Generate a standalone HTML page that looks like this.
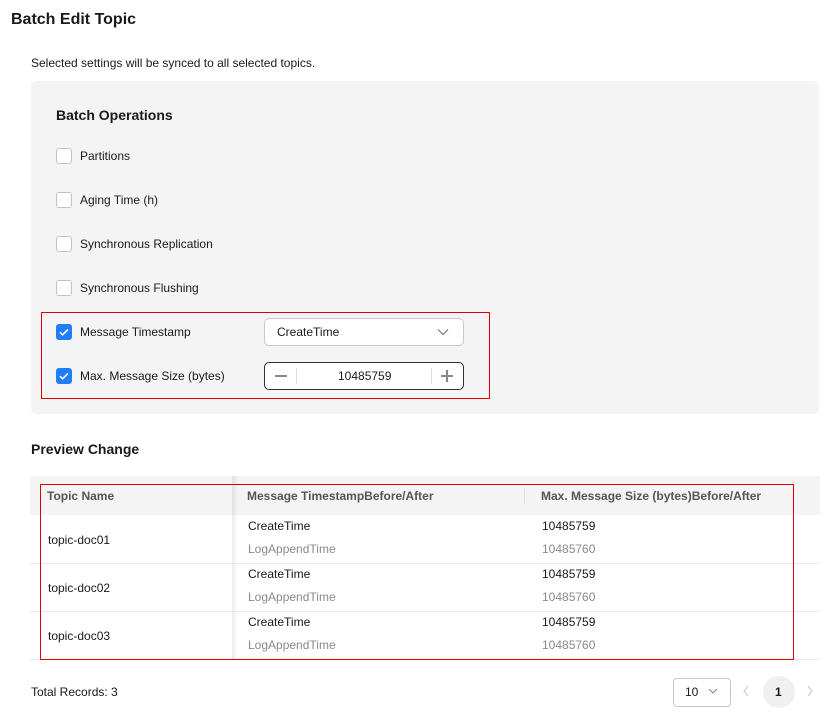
<!DOCTYPE html>
<html><head><meta charset="utf-8"><style>
*{box-sizing:border-box;margin:0;padding:0}
body{width:830px;height:712px;background:#fff;font-family:"Liberation Sans",Arial,sans-serif;color:#191919;position:relative;overflow:hidden;font-size:12px}
.a{position:absolute;white-space:nowrap}
.cb{position:absolute;width:16px;height:16px;border:1px solid #c2c2c2;border-radius:3px;background:#fff}
.cb.on{background:#1f7ef4;border-color:#1f7ef4}
.g{color:#8a8a8a}
.hl{position:absolute;left:30px;width:790px;height:1px;background:#e8e8e8}
</style></head><body>
<div class="a" style="left:11px;top:11px;font-size:16px;font-weight:bold">Batch Edit Topic</div>
<div class="a" style="left:31px;top:56px">Selected settings will be synced to all selected topics.</div>
<div class="a" style="left:31px;top:81px;width:788px;height:333px;background:#f4f4f4;border-radius:6px"></div>
<div class="a" style="left:56px;top:107px;font-size:14px;font-weight:bold">Batch Operations</div>
<div class="cb" style="left:56px;top:148px"></div><div class="a" style="left:80px;top:149px">Partitions</div>
<div class="cb" style="left:56px;top:192px"></div><div class="a" style="left:80px;top:193px">Aging Time (h)</div>
<div class="cb" style="left:56px;top:236px"></div><div class="a" style="left:80px;top:237px">Synchronous Replication</div>
<div class="cb" style="left:56px;top:280px"></div><div class="a" style="left:80px;top:281px">Synchronous Flushing</div>
<div class="a" style="left:41px;top:312px;width:449px;height:87px;border:1px solid #e00000"></div>
<div class="cb on" style="left:56px;top:324px"><svg width="14" height="14" viewBox="0 0 14 14"><path d="M3 7.2l2.6 2.6L11 4.4" stroke="#fff" stroke-width="1.6" fill="none"/></svg></div>
<div class="a" style="left:80px;top:325px">Message Timestamp</div>
<div class="a" style="left:264px;top:318px;width:200px;height:28px;border:1px solid #c8c8c8;border-radius:5px;background:#fff"></div>
<div class="a" style="left:277px;top:325px">CreateTime</div>
<svg class="a" style="left:437px;top:327px" width="12" height="10" viewBox="0 0 12 10"><path d="M1 2.5l5 5 5-5" stroke="#777" stroke-width="1.2" fill="none"/></svg>
<div class="cb on" style="left:56px;top:368px"><svg width="14" height="14" viewBox="0 0 14 14"><path d="M3 7.2l2.6 2.6L11 4.4" stroke="#fff" stroke-width="1.6" fill="none"/></svg></div>
<div class="a" style="left:80px;top:369px">Max. Message Size (bytes)</div>
<div class="a" style="left:264px;top:362px;width:200px;height:28px;border:1px solid #333;border-radius:5px;background:#fff"></div>
<div class="a" style="left:296px;top:368px;width:1px;height:16px;background:#ddd"></div>
<div class="a" style="left:431px;top:368px;width:1px;height:16px;background:#ddd"></div>
<div class="a" style="left:275px;top:375px;width:12px;height:1.5px;background:#888"></div>
<div class="a" style="left:441px;top:375px;width:12px;height:1.5px;background:#888"></div>
<div class="a" style="left:446px;top:370px;width:1.5px;height:12px;background:#888"></div>
<div class="a" style="left:338px;top:369px">10485759</div>
<div class="a" style="left:31px;top:441px;font-size:14px;font-weight:bold">Preview Change</div>
<div class="a" style="left:30px;top:476px;width:790px;height:39px;background:#f4f4f4"></div>
<div class="a" style="left:232px;top:476px;width:6px;height:183px;background:linear-gradient(90deg,rgba(0,0,0,.08),rgba(0,0,0,0))"></div>
<div class="a" style="left:524px;top:488px;width:1px;height:16px;background:#ddd"></div>
<div class="a" style="left:47px;top:489px;color:#555;font-weight:bold">Topic Name</div>
<div class="a" style="left:247px;top:489px;color:#555;font-weight:bold">Message TimestampBefore/After</div>
<div class="a" style="left:541px;top:489px;color:#555;font-weight:bold">Max. Message Size (bytes)Before/After</div>
<div class="hl" style="top:563px"></div><div class="hl" style="top:611px"></div><div class="hl" style="top:659px"></div>
<div class="a" style="left:48px;top:533px">topic-doc01</div>
<div class="a" style="left:248px;top:519px">CreateTime</div><div class="a g" style="left:248px;top:542px">LogAppendTime</div>
<div class="a" style="left:542px;top:519px">10485759</div><div class="a g" style="left:542px;top:542px">10485760</div>
<div class="a" style="left:48px;top:581px">topic-doc02</div>
<div class="a" style="left:248px;top:567px">CreateTime</div><div class="a g" style="left:248px;top:590px">LogAppendTime</div>
<div class="a" style="left:542px;top:567px">10485759</div><div class="a g" style="left:542px;top:590px">10485760</div>
<div class="a" style="left:48px;top:629px">topic-doc03</div>
<div class="a" style="left:248px;top:615px">CreateTime</div><div class="a g" style="left:248px;top:638px">LogAppendTime</div>
<div class="a" style="left:542px;top:615px">10485759</div><div class="a g" style="left:542px;top:638px">10485760</div>
<div class="a" style="left:40px;top:484px;width:754px;height:176px;border:1px solid #e00000"></div>
<div class="a" style="left:31px;top:685px">Total Records: 3</div>
<div class="a" style="left:673px;top:678px;width:58px;height:29px;border:1px solid #c8c8c8;border-radius:4px"></div>
<div class="a" style="left:685px;top:685px">10</div>
<svg class="a" style="left:708px;top:687px" width="10" height="8" viewBox="0 0 10 8"><path d="M1 2l4 4 4-4" stroke="#888" stroke-width="1.1" fill="none"/></svg>
<svg class="a" style="left:742px;top:685px" width="8" height="12" viewBox="0 0 8 12"><path d="M6 1L2 6l4 5" stroke="#ccc" stroke-width="1.1" fill="none"/></svg>
<div class="a" style="left:763px;top:676px;width:32px;height:32px;border-radius:50%;background:#f0f0f0"></div>
<div class="a" style="left:775px;top:685px;font-weight:bold">1</div>
<svg class="a" style="left:806px;top:685px" width="8" height="12" viewBox="0 0 8 12"><path d="M2 1l4 5-4 5" stroke="#ccc" stroke-width="1.1" fill="none"/></svg>
</body></html>
